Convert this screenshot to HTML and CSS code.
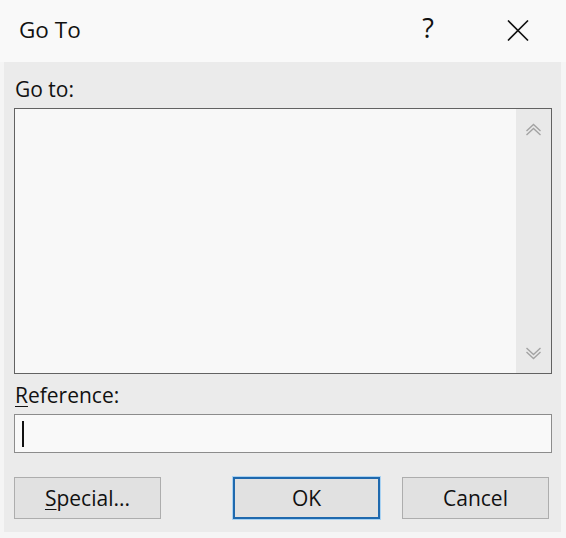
FILE: index.html
```html
<!DOCTYPE html>
<html>
<head>
<meta charset="utf-8">
<link rel="stylesheet" href="styles.css">
</head>
<body>
<div class="window">
  <div class="titlebar">
    <div class="title">Go To</div>
    <div class="help">?</div>
    <div class="close">
      <svg width="22" height="21" viewBox="0 0 22 21"><path d="M1 0.5 L21 20.5 M21 0.5 L1 20.5" stroke="#111" stroke-width="1.6" fill="none"/></svg>
    </div>
  </div>
  <div class="panel">
    <div class="label">Go to:</div>
    <div class="listbox">
      <div class="listarea"></div>
      <div class="scrollbar">
        <svg class="arrow" width="17" height="14" viewBox="0 0 17 14"><path d="M1.5 8 L8.5 1.5 L15.5 8 M1.5 12 L8.5 5.5 L15.5 12" stroke="#a3a3a3" stroke-width="1.4" fill="none"/></svg>
        <svg class="arrow" width="17" height="14" viewBox="0 0 17 14"><path d="M1.5 2 L8.5 8.5 L15.5 2 M1.5 6 L8.5 12.5 L15.5 6" stroke="#a3a3a3" stroke-width="1.4" fill="none"/></svg>
      </div>
    </div>
    <div class="label label-ref"><span class="u">R</span>eference:</div>
    <div class="input"><span class="caret"></span></div>
    <div class="buttons">
      <div class="btn"><span class="u">S</span>pecial...</div>
      <div class="spacer"></div>
      <div class="btn btn-default">OK</div>
      <div class="btn">Cancel</div>
    </div>
  </div>
</div>
</body>
</html>
```
FILE: styles.css
```css
html, body {
  margin: 0;
  padding: 0;
  background: #f6f6f6;
}
body {
  font-family: "Open Sans", "Noto Sans", sans-serif;
  color: #111;
}
.window {
  width: 566px;
  height: 538px;
  display: flex;
  flex-direction: column;
  background: #f5f5f5;
}
.titlebar {
  height: 62px;
  flex: none;
  display: flex;
  align-items: flex-start;
  background: #f9f9f9;
}
.title {
  font-size: 22.5px;
  line-height: 30px;
  padding-top: 15px;
  padding-left: 19px;
  flex: 1;
}
.help {
  font-size: 27px;
  line-height: 34px;
  padding-top: 11px;
  margin-right: 73px;
}
.close {
  padding-top: 20px;
  margin-right: 37px;
}
.close svg {
  display: block;
}
.panel {
  flex: 1;
  margin: 0 5px 6px 4px;
  background: #ebebeb;
  padding: 13px 9px 0 10px;
  display: flex;
  flex-direction: column;
}
.label {
  font-size: 21px;
  line-height: 28px;
  padding-left: 1px;
}
.u {
  text-decoration: underline;
  text-underline-offset: 3px;
  text-decoration-thickness: 1px;
}
.listbox {
  margin-top: 5px;
  height: 264px;
  border: 1px solid #626262;
  display: flex;
  background: #f8f8f8;
}
.listarea {
  flex: 1;
}
.scrollbar {
  width: 35px;
  background: #e9e9e9;
  display: flex;
  flex-direction: column;
  justify-content: space-between;
  align-items: center;
  padding: 14px 0 13px 0;
}
.arrow {
  display: block;
}
.label-ref {
  margin-top: 7px;
}
.input {
  margin-top: 5px;
  height: 37px;
  border: 1px solid #8c8c8c;
  background: #f9f9f9;
  display: flex;
  align-items: center;
  padding-left: 7px;
}
.caret {
  display: block;
  width: 2px;
  height: 26px;
  background: #111;
}
.buttons {
  margin-top: 24px;
  display: flex;
  gap: 22px;
  padding-right: 3px;
}
.spacer {
  flex: 1;
}
.btn {
  width: 145px;
  height: 40px;
  border: 1px solid #adadad;
  background: #e1e1e1;
  font-size: 21px;
  line-height: 40px;
  text-align: center;
}
.btn-default {
  width: 143px;
  height: 38px;
  line-height: 38px;
  border: 2px solid #1f69ae;
  box-shadow: 0 0 0 1px #a9d2f2;
}
```
